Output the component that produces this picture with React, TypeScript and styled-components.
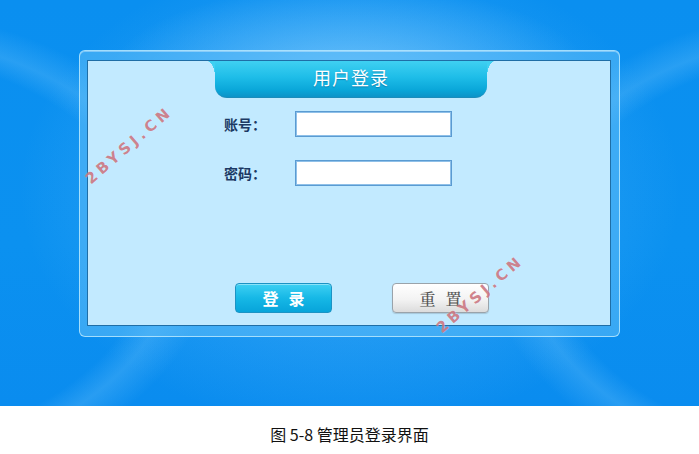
import React from "react"
import styled, { createGlobalStyle } from "styled-components"

const GlobalStyle = createGlobalStyle`
  html, body {
    margin: 0;
    padding: 0;
    background: #ffffff;
  }
  * {
    box-sizing: border-box;
  }
`

const SPage = styled.div`
  width: 699px;
  height: 454px;
  display: flex;
  flex-direction: column;
  font-family: "Noto Sans CJK SC", "Noto Sans", sans-serif;
`

const SStage = styled.div`
  position: relative;
  height: 406px;
  overflow: hidden;
  padding: 50px 0 0 79px;
  background:
    radial-gradient(ellipse 240px 90px at 350px 75px, rgba(150, 215, 255, 0.6), rgba(150, 215, 255, 0) 100%),
    radial-gradient(ellipse 330px 240px at 350px 190px, rgba(110, 195, 252, 0.55), rgba(110, 195, 252, 0) 100%),
    radial-gradient(ellipse 480px 320px at -150px 250px, rgba(0, 0, 0, 0) 62%, rgba(110, 195, 250, 0.3) 68%, rgba(0, 0, 0, 0) 76%),
    radial-gradient(ellipse 480px 320px at 850px 250px, rgba(0, 0, 0, 0) 62%, rgba(110, 195, 250, 0.3) 68%, rgba(0, 0, 0, 0) 76%),
    linear-gradient(180deg, #0a8ff0 0%, #0b91f0 60%, #0a8cef 100%);
`

const SFrame = styled.div`
  width: 541px;
  height: 287px;
  padding: 9px 8px 10px 7px;
  border: 1px solid rgba(190, 235, 255, 0.8);
  border-radius: 6px;
  background: rgba(95, 190, 248, 0.55);
  box-shadow: inset 0 1px 0 rgba(255, 255, 255, 0.35);
`

const SPanel = styled.div`
  height: 100%;
  display: flex;
  flex-direction: column;
  align-items: center;
  border: 1px solid #1f6ea6;
  background: #c2eaff;
`

const STab = styled.div`
  position: relative;
  width: 272px;
  height: 37px;
  margin-left: 4px;
  padding-bottom: 4px;
  display: flex;
  align-items: center;
  justify-content: center;
  border-radius: 0 0 12px 12px;
  border-bottom: 1px solid #1c8cba;
  background: linear-gradient(180deg, #3fd0f2 0%, #1ebde8 45%, #0aa7d9 80%, #0d93c8 100%);
  color: #ffffff;
  font-size: 18px;
  letter-spacing: 1px;
  text-shadow: 0 1px 1px rgba(0, 90, 140, 0.5);

  &::before,
  &::after {
    content: "";
    position: absolute;
    top: 0;
    width: 8px;
    height: 16px;
  }
  &::before {
    left: -8px;
    background: radial-gradient(ellipse 8px 16px at 0 100%, transparent 98%, #3fd0f2 100%);
  }
  &::after {
    right: -8px;
    background: radial-gradient(ellipse 8px 16px at 100% 100%, transparent 98%, #3fd0f2 100%);
  }
`

const SForm = styled.div`
  align-self: flex-start;
  display: grid;
  grid-template-columns: 71px 157px;
  row-gap: 23px;
  align-items: center;
  margin: 13px 0 0 136px;
`

const SLabel = styled.span`
  font-size: 14px;
  font-weight: 700;
  color: #1c3a64;
`

const SInput = styled.input`
  width: 157px;
  height: 26px;
  border: 1px solid #5a9bd2;
  box-shadow: inset 0 0 0 1px #8fc0e8;
  background: #ffffff;
  outline: none;
`

const SButtons = styled.div`
  align-self: flex-start;
  display: flex;
  gap: 60px;
  margin: 97px 0 0 147px;
`

const SButton = styled.button<{ $variant: "primary" | "plain" }>`
  width: 97px;
  height: 30px;
  padding: 0;
  border-radius: 4px;
  font-size: 16px;
  letter-spacing: 10px;
  text-indent: 10px;
  cursor: pointer;
  border: 1px solid ${({ $variant }) => ($variant === "primary" ? "#1c93c4" : "#9aa3aa")};
  background: ${({ $variant }) =>
    $variant === "primary"
      ? "linear-gradient(180deg, #3ed0f3 0%, #16b8e6 50%, #07a4da 100%)"
      : "linear-gradient(180deg, #ffffff 0%, #f3f3f3 55%, #dcdcdc 100%)"};
  color: ${({ $variant }) => ($variant === "primary" ? "#ffffff" : "#555555")};
  font-family: ${({ $variant }) =>
    $variant === "primary"
      ? '"Noto Sans CJK SC", sans-serif'
      : '"Noto Serif CJK SC", "Noto Sans CJK SC", serif'};
  font-weight: ${({ $variant }) => ($variant === "primary" ? 700 : 500)};
  box-shadow: ${({ $variant }) =>
    $variant === "primary" ? "inset 0 1px 0 rgba(255,255,255,0.4)" : "0 1px 1px rgba(0,0,0,0.15)"};
`

const SWatermark = styled.span<{ $x: number; $y: number }>`
  position: absolute;
  left: ${({ $x }) => $x}px;
  top: ${({ $y }) => $y}px;
  transform: translate(-50%, -50%) rotate(-41deg);
  font-family: "DejaVu Sans", sans-serif;
  font-size: 15px;
  font-weight: 700;
  letter-spacing: 4px;
  color: rgba(196, 100, 112, 0.8);
  text-shadow: 0 0 1px rgba(255, 255, 255, 0.6);
  white-space: nowrap;
  pointer-events: none;
`

const SCaption = styled.div`
  flex: 1;
  display: flex;
  align-items: center;
  justify-content: center;
  padding-top: 8px;
  font-size: 16px;
  color: #111111;
`

const App = () => {
  return (
    <SPage>
      <GlobalStyle />
      <SStage>
        <SFrame>
          <SPanel>
            <STab>用户登录</STab>
            <SForm>
              <SLabel>账号：</SLabel>
              <SInput type="text" />
              <SLabel>密码：</SLabel>
              <SInput type="password" />
            </SForm>
            <SButtons>
              <SButton $variant="primary">登录</SButton>
              <SButton $variant="plain">重置</SButton>
            </SButtons>
          </SPanel>
        </SFrame>
        <SWatermark $x={129} $y={145}>2BYSJ.CN</SWatermark>
        <SWatermark $x={480} $y={294}>2BYSJ.CN</SWatermark>
      </SStage>
      <SCaption>图 5-8 管理员登录界面</SCaption>
    </SPage>
  )
}

export default App
